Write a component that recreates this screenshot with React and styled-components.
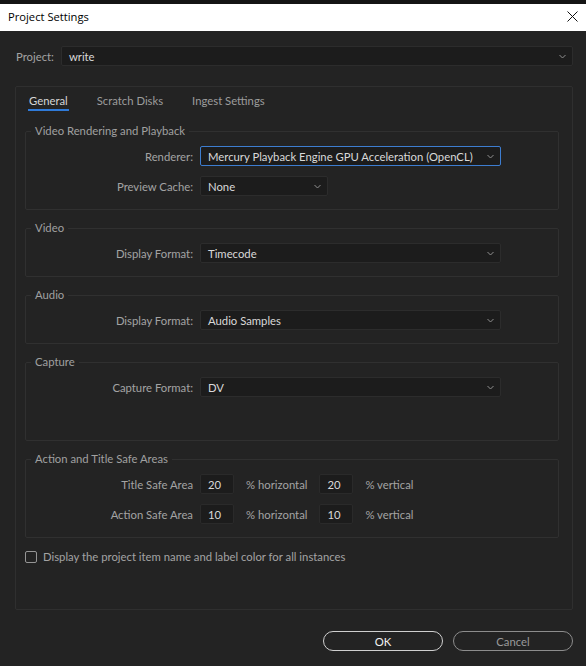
import React from 'react'
import styled, { createGlobalStyle } from 'styled-components'

const Global = createGlobalStyle`
  html, body {
    margin: 0;
    background: #232323;
  }
  body {
    font-family: Lato, "Open Sans", sans-serif;
    font-size: 11.3px;
  }
`

const Window = styled.div`
  width: 586px;
  height: 666px;
  background: #232323;
  display: flex;
  flex-direction: column;
  overflow: hidden;
`

const TopEdge = styled.div`
  height: 4px;
  background: #141414;
`

const TitleBar = styled.div`
  height: 27px;
  background: #ffffff;
  display: flex;
  align-items: center;
  justify-content: space-between;
  padding: 0 8px 3px 8px;
  box-sizing: border-box;
  font-family: "Open Sans", "Noto Sans", sans-serif;
  font-size: 11.2px;
  color: #000;
`

const Body = styled.div`
  flex: 1;
  display: flex;
  flex-direction: column;
  padding: 15px 13px 0 15px;
`

const ProjectRow = styled.div`
  display: flex;
  align-items: center;
  height: 20px;
`

const ProjectLabel = styled.span`
  padding-left: 1px;
  margin-right: 7px;
  color: #a3a3a3;
`

const Select = styled.div`
  box-sizing: border-box;
  height: 20px;
  width: ${p => (p.$width ? `${p.$width}px` : 'auto')};
  flex: ${p => (p.$width ? 'none' : '1')};
  display: flex;
  align-items: center;
  justify-content: space-between;
  padding: 0 6px 0 7px;
  background: #1c1c1c;
  border: 1px solid ${p => (p.$focused ? '#3d7dd0' : '#2c2c2c')};
  border-radius: 2px;
  color: #d9d9d9;
  white-space: nowrap;
`

const Panel = styled.div`
  margin-top: 20px;
  height: 524px;
  box-sizing: border-box;
  border: 1px solid #2f2f2f;
  border-radius: 2px;
  padding: 0 13px 0 9px;
  display: flex;
  flex-direction: column;
`

const Tabs = styled.div`
  display: flex;
  gap: 27px;
  padding: 7px 0 0 3px;
`

const Tab = styled.div`
  line-height: 14px;
  padding: 0 1px 1px;
  border-bottom: 2px solid ${p => (p.$active ? '#2f7ad8' : 'transparent')};
  color: ${p => (p.$active ? '#d6d6d6' : '#9c9c9c')};
`

const Groups = styled.div`
  display: flex;
  flex-direction: column;
  gap: 11px;
  margin-top: 13px;
`

const Group = styled.fieldset`
  margin: 0;
  padding: 8px 0 ${p => p.$bottom || 13}px 0;
  border: 1px solid #303030;
  border-radius: 2px;
  display: flex;
  flex-direction: column;
  gap: 10px;
`

const Legend = styled.legend`
  line-height: 14px;
  padding: 0 4px;
  margin-left: 5px;
  color: #a0a0a0;
`

const Row = styled.div`
  display: flex;
  align-items: center;
  height: 20px;
`

const Label = styled.span`
  width: 167px;
  margin-right: 7px;
  text-align: right;
  color: #a3a3a3;
`

const NumberBox = styled.div`
  box-sizing: border-box;
  width: 34px;
  height: 20px;
  display: flex;
  align-items: center;
  padding-left: 7px;
  background: #1c1c1c;
  border: 1px solid #2a2a2a;
  border-radius: 2px;
  color: #d9d9d9;
`

const Unit = styled.span`
  margin: 0 12px;
  color: #a3a3a3;
`

const CheckRow = styled.label`
  display: flex;
  align-items: center;
  gap: 6px;
  margin-top: 12px;
  color: #a3a3a3;
`

const CheckBox = styled.span`
  box-sizing: border-box;
  width: 12px;
  height: 12px;
  border: 1.5px solid #959595;
  border-radius: 2px;
`

const Footer = styled.div`
  display: flex;
  justify-content: flex-end;
  gap: 10px;
  margin-top: 21px;
`

const Button = styled.button`
  box-sizing: border-box;
  width: 120px;
  height: 20px;
  padding: 0;
  border-radius: 10px;
  background: transparent;
  border: 1.5px solid ${p => (p.$primary ? '#cfcfcf' : '#8c8c8c')};
  color: ${p => (p.$primary ? '#f2f2f2' : '#9a9a9a')};
  font-family: inherit;
  font-size: 11.3px;
`

const Chevron = () => (
  <svg width="7" height="5" viewBox="0 0 7 5">
    <path d="M0.5 1 L3.5 4 L6.5 1" fill="none" stroke="#8e8e8e" strokeWidth="1" />
  </svg>
)

const Close = () => (
  <svg width="11" height="11" viewBox="0 0 11 11">
    <path d="M0.5 0.5 L10.5 10.5 M10.5 0.5 L0.5 10.5" stroke="#111" strokeWidth="1" />
  </svg>
)

const Dropdown = ({ value, width, focused }) => (
  <Select $width={width} $focused={focused}>
    <span>{value}</span>
    <Chevron />
  </Select>
)

const SafeRow = ({ label, h, v }) => (
  <Row>
    <Label>{label}</Label>
    <NumberBox>{h}</NumberBox>
    <Unit>% horizontal</Unit>
    <NumberBox>{v}</NumberBox>
    <Unit>% vertical</Unit>
  </Row>
)

const App = () => {
  return (
    <Window>
      <Global />
      <TopEdge />
      <TitleBar>
        <span>Project Settings</span>
        <Close />
      </TitleBar>
      <Body>
        <ProjectRow>
          <ProjectLabel>Project:</ProjectLabel>
          <Dropdown value="write" />
        </ProjectRow>
        <Panel>
          <Tabs>
            <Tab $active>General</Tab>
            <Tab>Scratch Disks</Tab>
            <Tab>Ingest Settings</Tab>
          </Tabs>
          <Groups>
            <Group>
              <Legend>Video Rendering and Playback</Legend>
              <Row>
                <Label>Renderer:</Label>
                <Dropdown value="Mercury Playback Engine GPU Acceleration (OpenCL)" width={301} focused />
              </Row>
              <Row>
                <Label>Preview Cache:</Label>
                <Dropdown value="None" width={128} />
              </Row>
            </Group>
            <Group>
              <Legend>Video</Legend>
              <Row>
                <Label>Display Format:</Label>
                <Dropdown value="Timecode" width={301} />
              </Row>
            </Group>
            <Group>
              <Legend>Audio</Legend>
              <Row>
                <Label>Display Format:</Label>
                <Dropdown value="Audio Samples" width={301} />
              </Row>
            </Group>
            <Group $bottom={43}>
              <Legend>Capture</Legend>
              <Row>
                <Label>Capture Format:</Label>
                <Dropdown value="DV" width={301} />
              </Row>
            </Group>
            <Group>
              <Legend>Action and Title Safe Areas</Legend>
              <SafeRow label="Title Safe Area" h="20" v="20" />
              <SafeRow label="Action Safe Area" h="10" v="10" />
            </Group>
          </Groups>
          <CheckRow>
            <CheckBox />
            Display the project item name and label color for all instances
          </CheckRow>
        </Panel>
        <Footer>
          <Button $primary>OK</Button>
          <Button>Cancel</Button>
        </Footer>
      </Body>
    </Window>
  )
}

export default App
